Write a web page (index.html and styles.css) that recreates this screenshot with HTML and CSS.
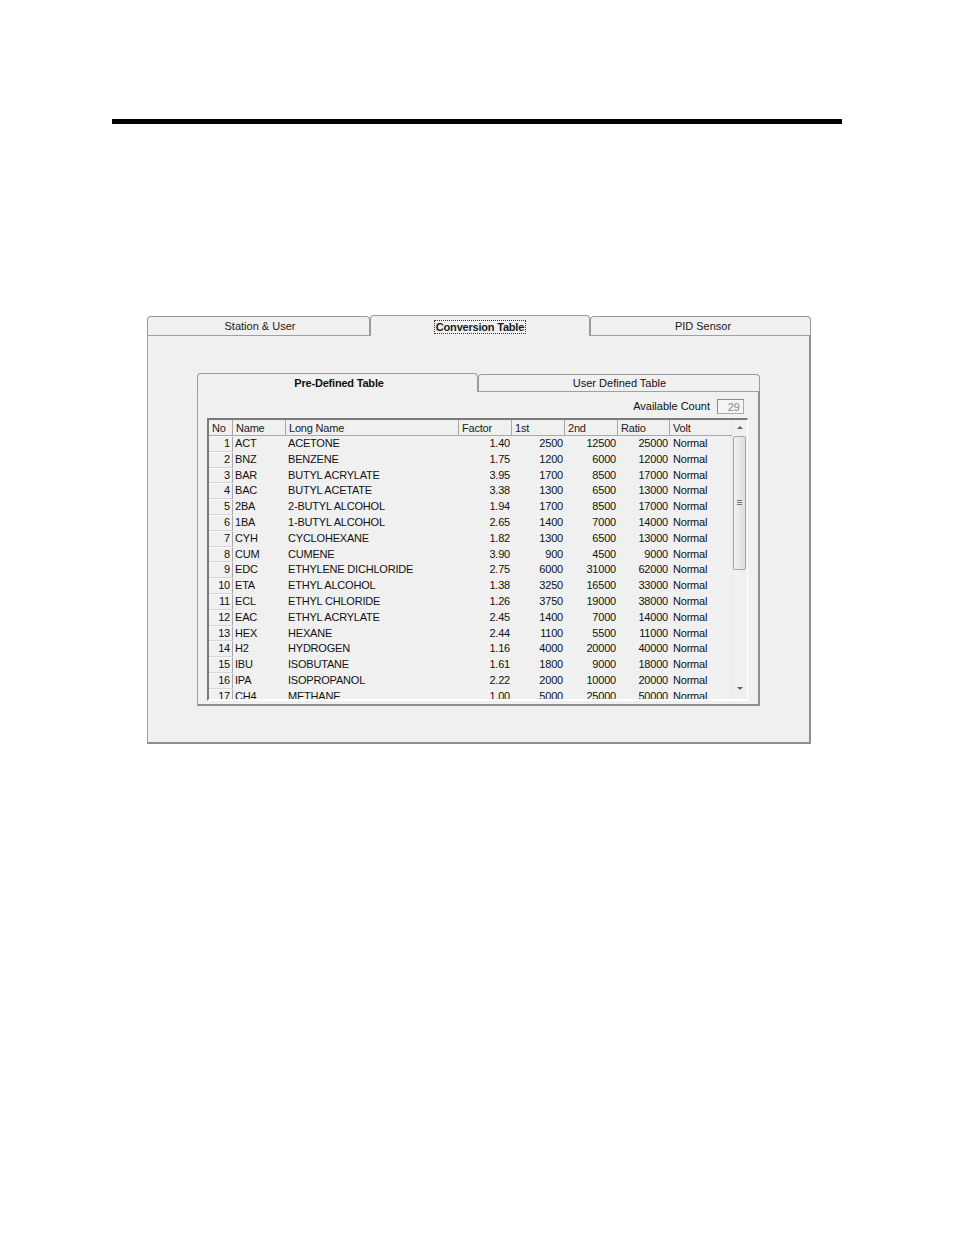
FILE: index.html
```html
<!DOCTYPE html>
<html>
<head>
<meta charset="utf-8">
<link rel="stylesheet" href="styles.css">
</head>
<body>
<div class="page">
  <div class="rule"></div>
  <div class="window">
    <div class="tabs">
      <div class="tab t1">Station &amp; User</div>
      <div class="tab sel"><span class="focus">Conversion Table</span></div>
      <div class="tab t3">PID Sensor</div>
    </div>
    <div class="panel">
      <div class="inner">
        <div class="itabs">
          <div class="itab isel">Pre-Defined Table</div>
          <div class="itab">User Defined Table</div>
        </div>
        <div class="ipanel">
          <div class="count"><span class="clabel">Available Count</span><span class="cbox">29</span></div>
          <div class="grid">
            <div class="gmain">
              <div class="row head">
                <div class="c">No</div><div class="c">Name</div><div class="c">Long Name</div><div class="c">Factor</div><div class="c">1st</div><div class="c">2nd</div><div class="c">Ratio</div><div class="c">Volt</div>
              </div>
              <div class="body">
                <div class="row"><div class="c no">1</div><div class="c">ACT</div><div class="c">ACETONE</div><div class="c r">1.40</div><div class="c r">2500</div><div class="c r">12500</div><div class="c r">25000</div><div class="c v">Normal</div></div>
                <div class="row"><div class="c no">2</div><div class="c">BNZ</div><div class="c">BENZENE</div><div class="c r">1.75</div><div class="c r">1200</div><div class="c r">6000</div><div class="c r">12000</div><div class="c v">Normal</div></div>
                <div class="row"><div class="c no">3</div><div class="c">BAR</div><div class="c">BUTYL ACRYLATE</div><div class="c r">3.95</div><div class="c r">1700</div><div class="c r">8500</div><div class="c r">17000</div><div class="c v">Normal</div></div>
                <div class="row"><div class="c no">4</div><div class="c">BAC</div><div class="c">BUTYL ACETATE</div><div class="c r">3.38</div><div class="c r">1300</div><div class="c r">6500</div><div class="c r">13000</div><div class="c v">Normal</div></div>
                <div class="row"><div class="c no">5</div><div class="c">2BA</div><div class="c">2-BUTYL ALCOHOL</div><div class="c r">1.94</div><div class="c r">1700</div><div class="c r">8500</div><div class="c r">17000</div><div class="c v">Normal</div></div>
                <div class="row"><div class="c no">6</div><div class="c">1BA</div><div class="c">1-BUTYL ALCOHOL</div><div class="c r">2.65</div><div class="c r">1400</div><div class="c r">7000</div><div class="c r">14000</div><div class="c v">Normal</div></div>
                <div class="row"><div class="c no">7</div><div class="c">CYH</div><div class="c">CYCLOHEXANE</div><div class="c r">1.82</div><div class="c r">1300</div><div class="c r">6500</div><div class="c r">13000</div><div class="c v">Normal</div></div>
                <div class="row"><div class="c no">8</div><div class="c">CUM</div><div class="c">CUMENE</div><div class="c r">3.90</div><div class="c r">900</div><div class="c r">4500</div><div class="c r">9000</div><div class="c v">Normal</div></div>
                <div class="row"><div class="c no">9</div><div class="c">EDC</div><div class="c">ETHYLENE DICHLORIDE</div><div class="c r">2.75</div><div class="c r">6000</div><div class="c r">31000</div><div class="c r">62000</div><div class="c v">Normal</div></div>
                <div class="row"><div class="c no">10</div><div class="c">ETA</div><div class="c">ETHYL ALCOHOL</div><div class="c r">1.38</div><div class="c r">3250</div><div class="c r">16500</div><div class="c r">33000</div><div class="c v">Normal</div></div>
                <div class="row"><div class="c no">11</div><div class="c">ECL</div><div class="c">ETHYL CHLORIDE</div><div class="c r">1.26</div><div class="c r">3750</div><div class="c r">19000</div><div class="c r">38000</div><div class="c v">Normal</div></div>
                <div class="row"><div class="c no">12</div><div class="c">EAC</div><div class="c">ETHYL ACRYLATE</div><div class="c r">2.45</div><div class="c r">1400</div><div class="c r">7000</div><div class="c r">14000</div><div class="c v">Normal</div></div>
                <div class="row"><div class="c no">13</div><div class="c">HEX</div><div class="c">HEXANE</div><div class="c r">2.44</div><div class="c r">1100</div><div class="c r">5500</div><div class="c r">11000</div><div class="c v">Normal</div></div>
                <div class="row"><div class="c no">14</div><div class="c">H2</div><div class="c">HYDROGEN</div><div class="c r">1.16</div><div class="c r">4000</div><div class="c r">20000</div><div class="c r">40000</div><div class="c v">Normal</div></div>
                <div class="row"><div class="c no">15</div><div class="c">IBU</div><div class="c">ISOBUTANE</div><div class="c r">1.61</div><div class="c r">1800</div><div class="c r">9000</div><div class="c r">18000</div><div class="c v">Normal</div></div>
                <div class="row"><div class="c no">16</div><div class="c">IPA</div><div class="c">ISOPROPANOL</div><div class="c r">2.22</div><div class="c r">2000</div><div class="c r">10000</div><div class="c r">20000</div><div class="c v">Normal</div></div>
                <div class="row"><div class="c no">17</div><div class="c">CH4</div><div class="c">METHANE</div><div class="c r">1.00</div><div class="c r">5000</div><div class="c r">25000</div><div class="c r">50000</div><div class="c v">Normal</div></div>
              </div>
            </div>
            <div class="sbar">
              <div class="arrow up"></div>
              <div class="track">
                <div class="thumb"><span class="grip"></span></div>
              </div>
              <div class="arrow down"></div>
            </div>
          </div>
        </div>
      </div>
    </div>
  </div>
</div>
</body>
</html>
```

FILE: styles.css
```css
html, body {
  margin: 0;
  padding: 0;
  background: #ffffff;
}
body {
  font-family: "Liberation Sans", Arial, sans-serif;
  font-size: 11px;
  color: #111;
}
.page {
  width: 954px;
  height: 1235px;
  padding-top: 119px;
  box-sizing: border-box;
}
.rule {
  margin-left: 112px;
  width: 730px;
  height: 5px;
  background: #000;
}
.window {
  margin-left: 147px;
  margin-top: 191px;
  width: 664px;
}
.tabs {
  display: flex;
  height: 20px;
  align-items: flex-end;
  position: relative;
  z-index: 1;
}
.tab {
  box-sizing: border-box;
  height: 19px;
  border: 1px solid #9a9a9a;
  border-bottom: none;
  border-radius: 4px 4px 0 0;
  background: #f0f0f0;
  text-align: center;
  line-height: 18px;
  color: #1a1a1a;
}
.t1 { width: 223px; padding-left: 3px; }
.t3 { width: 221px; padding-left: 5px; }
.sel {
  width: 220px;
  height: 21px;
  margin-bottom: -1px;
  line-height: 22px;
  font-weight: bold;
  letter-spacing: -0.2px;
  border-color: #9a9a9a;
}
.focus {
  border: 1px dotted #333;
  padding: 0 1px;
  line-height: 12px;
  display: inline-block;
}
.panel {
  box-sizing: border-box;
  width: 664px;
  height: 409px;
  background: #f0f0f0;
  border-left: 1px solid #a0a0a0;
  border-top: 1px solid #a0a0a0;
  border-right: 2px solid #8e8e8e;
  border-bottom: 2px solid #8e8e8e;
  padding: 37px 0 0 49px;
}
.inner {
  width: 563px;
}
.itabs {
  display: flex;
  height: 18px;
  align-items: flex-end;
  position: relative;
  z-index: 1;
}
.itab {
  box-sizing: border-box;
  width: 282px;
  height: 17px;
  border: 1px solid #9a9a9a;
  border-bottom: none;
  border-radius: 4px 4px 0 0;
  text-align: center;
  line-height: 16px;
  background: #f0f0f0;
  padding-left: 1px;
}
.isel {
  width: 281px;
  height: 19px;
  margin-bottom: -1px;
  line-height: 19px;
  font-weight: bold;
  letter-spacing: -0.2px;
  padding-left: 3px;
}
.ipanel {
  box-sizing: border-box;
  height: 315px;
  background: #f0f0f0;
  border-left: 1px solid #a0a0a0;
  border-top: 1px solid #a0a0a0;
  border-right: 2px solid #8e8e8e;
  border-bottom: 2px solid #8e8e8e;
  padding: 7px 0 0 9px;
}
.count {
  display: flex;
  justify-content: flex-end;
  align-items: center;
  gap: 7px;
  height: 15px;
  padding-right: 14px;
}
.clabel {
  position: relative;
  top: -1px;
}
.cbox {
  box-sizing: border-box;
  width: 27px;
  height: 15px;
  border: 1px solid #a8a8a8;
  border-top-color: #8a8a8a;
  border-left-color: #8a8a8a;
  background: #f4f4f4;
  color: #888;
  text-align: right;
  padding-right: 3px;
  line-height: 14px;
}
.grid {
  margin-top: 4px;
  box-sizing: border-box;
  width: 541px;
  height: 283px;
  display: flex;
  border-left: 2px solid #7a7a7a;
  border-top: 2px solid #7a7a7a;
  border-right: 1px solid #fff;
  border-bottom: 2px solid #fff;
  background: #f0f0f0;
  overflow: hidden;
}
.gmain {
  width: 524px;
  overflow: hidden;
}
.row {
  display: grid;
  grid-template-columns: 24px 53px 173px 53px 53px 53px 52px 63px;
  height: 15.8px;
  line-height: 15.8px;
  white-space: nowrap;
  letter-spacing: -0.2px;
}
.row.head {
  height: 16px;
  line-height: 16px;
}
.head .c {
  box-sizing: border-box;
  border-right: 1px solid #a8a8a8;
  border-bottom: 1px solid #a8a8a8;
  padding-left: 3px;
  color: #1a1a1a;
}
.head .c:last-child { border-right: none; }
.c {
  overflow: hidden;
  padding-left: 2px;
}
.c.r {
  text-align: right;
  padding-left: 0;
  padding-right: 2px;
}
.c.v { padding-left: 3px; }
.c.no {
  box-sizing: border-box;
  text-align: right;
  padding: 0 2px 0 0;
  border-right: 1px solid #a8a8a8;
  border-bottom: 1px solid #d4d4d4;
  border-top: 1px solid #fafafa;
  line-height: 13.8px;
}
.sbar {
  width: 14px;
  display: flex;
  flex-direction: column;
  background: #f0f0f0;
  border-left: 1px solid #e8e8e8;
}
.arrow {
  height: 15px;
  position: relative;
}
.arrow::after {
  content: "";
  position: absolute;
  left: 4px;
  width: 0;
  height: 0;
  border-left: 3px solid transparent;
  border-right: 3px solid transparent;
}
.up::after {
  top: 6px;
  border-bottom: 3px solid #606060;
}
.down::after {
  top: 3px;
  border-top: 3px solid #606060;
}
.track {
  flex: 1;
  padding: 1px 1px 0 0;
}
.thumb {
  box-sizing: border-box;
  height: 134px;
  border: 1px solid #a6a6a6;
  border-radius: 2px;
  background: linear-gradient(to right, #f4f4f4, #dcdcdc);
  position: relative;
}
.grip {
  position: absolute;
  left: 3px;
  top: 63px;
  width: 5px;
  height: 5px;
  border-top: 1px solid #777;
  border-bottom: 1px solid #777;
  box-sizing: border-box;
}
.grip::after {
  content: "";
  position: absolute;
  left: 0;
  top: 1px;
  width: 5px;
  height: 1px;
  background: #777;
}
```
